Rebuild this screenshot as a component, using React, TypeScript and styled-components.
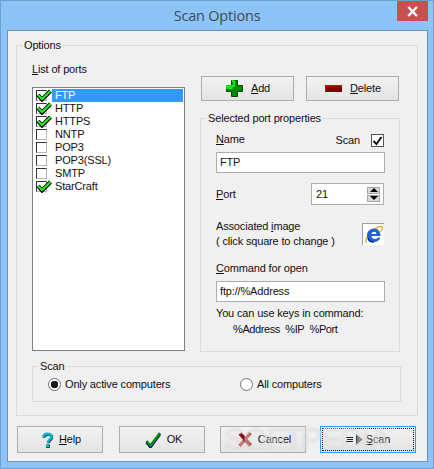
import React from 'react';
import styled, { createGlobalStyle } from 'styled-components';

const GlobalStyle = createGlobalStyle`
  html, body {
    margin: 0;
    padding: 0;
    background: #8cc4f8;
  }
  * {
    box-sizing: border-box;
  }
`;

const ports = [
  { name: 'FTP', on: true },
  { name: 'HTTP', on: true },
  { name: 'HTTPS', on: true },
  { name: 'NNTP', on: false },
  { name: 'POP3', on: false },
  { name: 'POP3(SSL)', on: false },
  { name: 'SMTP', on: false },
  { name: 'StarCraft', on: true },
];

const GreenCheck = () => (
  <CheckSvg width="16" height="13" viewBox="0 0 16 13">
    <path d="M2 6 L6 10.5 L14.500 2" fill="none" stroke="#000" strokeWidth="4" />
    <path d="M2 6 L6 10 L14.500 2" fill="none" stroke="#22ee22" strokeWidth="2.2" />
  </CheckSvg>
);

const PlusIcon = () => (
  <svg width="17" height="17" viewBox="0 0 17 17">
    <path d="M5.5 .5h6v5h5v6h-5v5h-6v-5h-5v-6h5z" fill="#008a00" stroke="#004d00" />
    <path d="M6 1h2v5H1v2h5v1" fill="none" stroke="#22ff22" strokeWidth="1.4" />
  </svg>
);

const MinusIcon = () => (
  <svg width="17" height="7" viewBox="0 0 17 7">
    <rect x="0" y="0" width="17" height="7" fill="#e00000" />
    <rect x="1" y="1.5" width="16" height="5.5" fill="#800000" />
  </svg>
);

const HelpIcon = () => (
  <svg width="11" height="16" viewBox="0 0 11 16">
    <path d="M1.500 5C1.500 .8 9.500 .8 9.500 4.500C9.500 7 6 7.500 6 10.500" fill="none" stroke="#06505f" strokeWidth="2.800" transform="translate(.5 .7)" />
    <path d="M1.500 5C1.500 .8 9.500 .8 9.500 4.500C9.500 7 6 7.500 6 10.500" fill="none" stroke="#12b4cc" strokeWidth="2.400" />
    <rect x="4" y="12.500" width="4" height="3.500" fill="#06505f" />
    <rect x="4" y="12.500" width="3" height="2.500" fill="#12b4cc" />
  </svg>
);

const OkIcon = () => (
  <svg width="16" height="16" viewBox="0 0 16 16">
    <path d="M1.500 9.500L5.500 14.500L15 1.500" fill="none" stroke="#001a70" strokeWidth="2.800" transform="translate(0 .6)" />
    <path d="M1.500 9L5.500 13.500L15 1" fill="none" stroke="#0a8a12" strokeWidth="2.600" />
  </svg>
);

const CancelIcon = () => (
  <svg width="14" height="15" viewBox="0 0 14 15">
    <path d="M2 1.500L12.500 13.500" stroke="#8c1010" strokeWidth="3.600" />
    <path d="M12.500 1L1.500 14" stroke="#a51a1a" strokeWidth="3" />
  </svg>
);

const ScanIcon = () => (
  <svg width="17" height="11" viewBox="0 0 17 11">
    <path d="M0 3.500h7M1 5.500h6M0 7.500h7" stroke="#222" strokeWidth="1" />
    <path d="M10 0L16.500 5.500L10 11z" fill="#333" />
  </svg>
);

const IeIcon = () => (
  <svg width="20" height="20" viewBox="0 0 20 20">
    <path d="M3 18C0 18 3 9 9 5C14 1.500 18 .5 18.500 2.500C19 4 17 6 16 7" fill="none" stroke="#e8a020" strokeWidth="1.200" />
    <path d="M3 10.500C3 6.500 6 3.500 10 3.500C14 3.500 16.500 6.500 16.500 11H7.500C7.800 14.500 12 15 14 12.500H16.300C15 16 12.500 17 10 17C6 17 3 14.500 3 10.500ZM7.500 9H12.500C12.300 6 7.800 6 7.500 9Z" fill="#1c62d4" fillRule="evenodd" />
    <path d="M4 13C4.500 15.500 7 17 10 17" fill="none" stroke="#0b2c80" strokeWidth="1.400" />
  </svg>
);

const App = () => {
  return (
    <>
      <GlobalStyle />
      <Window>
        <TitleBar>
          <Title>Scan Options</Title>
          <CloseButton>×</CloseButton>
        </TitleBar>
        <Client>
          <OptionsGroup>
            <Legend>Options</Legend>
            <Columns>
              <div>
                <ListLabel><u>L</u>ist of ports</ListLabel>
                <PortList>
                  {ports.map((port, i) => (
                    <PortRow key={port.name}>
                      <CheckBox>{port.on && <GreenCheck />}</CheckBox>
                      <PortName $selected={i === 0}>{port.name}</PortName>
                    </PortRow>
                  ))}
                </PortList>
              </div>
              <RightColumn>
                <ButtonRow>
                  <ActionButton><PlusIcon /><span><u>A</u>dd</span></ActionButton>
                  <ActionButton><MinusIcon /><span><u>D</u>elete</span></ActionButton>
                </ButtonRow>
                <PropertiesGroup>
                  <Legend>Selected port properties</Legend>
                  <NameRow>
                    <span><u>N</u>ame</span>
                    <ScanToggle>
                      <span>Scan</span>
                      <ScanBox>
                        <svg width="11" height="10" viewBox="0 0 11 10">
                          <path d="M1.500 5L4.500 8L9.500 1" fill="none" stroke="#111" strokeWidth="2" />
                        </svg>
                      </ScanBox>
                    </ScanToggle>
                  </NameRow>
                  <TextBox>FTP</TextBox>
                  <PortFieldRow>
                    <span><u>P</u>ort</span>
                    <SpinBox>
                      21
                      <SpinButtons>
                        <SpinButton><UpArrow /></SpinButton>
                        <SpinButton><DownArrow /></SpinButton>
                      </SpinButtons>
                    </SpinBox>
                  </PortFieldRow>
                  <ImageRow>
                    <ImageText>
                      Associated <u>i</u>mage<br />
                      ( click square to change )
                    </ImageText>
                    <ImageSquare><IeIcon /></ImageSquare>
                  </ImageRow>
                  <CommandLabel><u>C</u>ommand for open</CommandLabel>
                  <TextBox>ftp://%Address</TextBox>
                  <Hint>You can use keys in command:</Hint>
                  <KeysHint>%Address&nbsp; %IP&nbsp; %Port</KeysHint>
                </PropertiesGroup>
              </RightColumn>
            </Columns>
            <ScanGroup>
              <Legend>Scan</Legend>
              <RadioRow>
                <RadioOption $width={192}>
                  <Radio $checked />
                  Only active computers
                </RadioOption>
                <RadioOption $width={150}>
                  <Radio />
                  All computers
                </RadioOption>
              </RadioRow>
            </ScanGroup>
          </OptionsGroup>
          <Footer>
            <FooterButton><HelpIcon /><span><u>H</u>elp</span></FooterButton>
            <FooterButton $left={16}><OkIcon /><span>OK</span></FooterButton>
            <FooterButton $left={15}><CancelIcon /><span>Cancel</span></FooterButton>
            <FocusedButton $left={14}>
              <FocusRing><ScanIcon /><span><u>S</u>can</span></FocusRing>
            </FocusedButton>
          </Footer>
        </Client>
        <Watermark>SOFTPEDIA<sup>®</sup></Watermark>
      </Window>
    </>
  );
};

export default App;

const Window = styled.div`
  position: relative;
  width: 434px;
  height: 469px;
  display: flex;
  flex-direction: column;
  overflow: hidden;
  background: #8cc4f8;
  border: 1px solid #6f9fcf;
  font-family: "Liberation Sans", Arial, sans-serif;
  font-size: 11px;
  line-height: 13px;
  letter-spacing: -0.16px;
  color: #111;
`;

const TitleBar = styled.div`
  position: relative;
  height: 29px;
  flex: none;
  display: flex;
  align-items: center;
  justify-content: center;
`;

const Title = styled.div`
  font-family: "Open Sans", "Noto Sans", sans-serif;
  font-size: 14.5px;
  letter-spacing: -0.2px;
  color: #3d4a58;
`;

const CloseButton = styled.div`
  position: absolute;
  top: 0;
  right: 5px;
  width: 31px;
  height: 20px;
  background: #c75050;
  color: #fff;
  font-family: "DejaVu Sans", sans-serif;
  font-size: 17px;
  font-weight: bold;
  line-height: 20px;
  text-align: center;
`;

const Client = styled.div`
  flex: 1;
  margin: 0 5px 6px 6px;
  padding: 8px 9px 0 8px;
  background: #f0f0f0;
  border: 1px solid #6f93b8;
`;

const Group = styled.fieldset`
  margin: 0;
  min-width: 0;
  border: 1px solid #dcdcdc;
  border-radius: 0;
`;

const Legend = styled.legend`
  padding: 0 1px;
  margin-left: -9px;
  line-height: 13px;
`;

const OptionsGroup = styled(Group)`
  height: 377px;
  padding: 11px 15px 0 15px;
`;

const Columns = styled.div`
  display: grid;
  grid-template-columns: 153px 201px;
  column-gap: 15px;
`;

const ListLabel = styled.div`
  height: 24px;
`;

const PortList = styled.div`
  height: 264px;
  padding: 1px;
  background: #fff;
  border: 1px solid #7b8189;
`;

const PortRow = styled.div`
  height: 13px;
  display: flex;
  align-items: center;
  padding-left: 2px;
`;

const CheckBox = styled.div`
  position: relative;
  width: 11px;
  height: 11px;
  flex: none;
  background: #fff;
  border: 1px solid;
  border-color: #333 #b5b5b5 #b5b5b5 #333;
`;

const CheckSvg = styled.svg`
  position: absolute;
  left: -1px;
  top: -2px;
`;

const PortName = styled.div<{ $selected?: boolean }>`
  flex: 1;
  height: 13px;
  margin-left: 5px;
  padding-left: 3px;
  background: ${(p) => (p.$selected ? '#3399ff' : 'transparent')};
  color: ${(p) => (p.$selected ? '#fff' : '#111')};
`;

const RightColumn = styled.div`
  padding-top: 13px;
`;

const ButtonRow = styled.div`
  display: flex;
  justify-content: space-between;
  padding: 0 2px 0 1px;
  margin-bottom: 11px;
`;

const RaisedButton = styled.div`
  display: flex;
  align-items: center;
  justify-content: center;
  background: linear-gradient(#f2f2f2, #e4e4e4);
  border: 1px solid #adadad;
`;

const ActionButton = styled(RaisedButton)`
  width: 93px;
  height: 25px;
  gap: 8px;
  padding-left: 1px;
`;

const PropertiesGroup = styled(Group)`
  height: 240px;
  width: 200px;
  padding: 8px 15px 0 15px;
`;

const NameRow = styled.div`
  height: 19px;
  display: flex;
  justify-content: space-between;
  align-items: flex-start;
`;

const ScanToggle = styled.div`
  display: flex;
  align-items: center;
  gap: 11px;
  margin-top: 1px;
`;

const ScanBox = styled.div`
  width: 13px;
  height: 13px;
  display: flex;
  align-items: center;
  justify-content: center;
  background: #fff;
  border: 1px solid #555;
`;

const TextBox = styled.div`
  width: 169px;
  height: 21px;
  display: flex;
  align-items: center;
  padding-left: 3px;
  background: #fff;
  border: 1px solid #adadad;
`;

const PortFieldRow = styled.div`
  display: flex;
  align-items: center;
  justify-content: space-between;
  margin-top: 10px;
`;

const SpinBox = styled.div`
  width: 73px;
  height: 22px;
  display: flex;
  align-items: center;
  justify-content: space-between;
  padding: 0 3px 0 4px;
  background: #fff;
  border: 1px solid #adadad;
`;

const SpinButtons = styled.div`
  display: flex;
  flex-direction: column;
  gap: 1px;
`;

const SpinButton = styled.div`
  width: 13px;
  height: 7px;
  display: flex;
  align-items: center;
  justify-content: center;
  background: #d8d8d8;
  border: 1px solid #a5a5a5;
`;

const UpArrow = styled.div`
  border: 4px solid transparent;
  border-top: 0;
  border-bottom-color: #000;
`;

const DownArrow = styled.div`
  border: 4px solid transparent;
  border-bottom: 0;
  border-top-color: #000;
`;

const ImageRow = styled.div`
  display: flex;
  justify-content: space-between;
  margin-top: 14px;
  height: 40px;
`;

const ImageText = styled.div`
  line-height: 15px;
`;

const ImageSquare = styled.div`
  width: 22px;
  height: 22px;
  margin-top: 4px;
  display: flex;
  align-items: center;
  justify-content: center;
  background: #fff;
  border-top: 1px solid #a0a0a0;
  border-left: 1px solid #a0a0a0;
`;

const CommandLabel = styled.div`
  height: 19px;
  margin-top: 3px;
`;

const Hint = styled.div`
  margin-top: 5px;
`;

const KeysHint = styled.div`
  margin-top: 3px;
  padding-left: 17px;
  letter-spacing: -0.4px;
`;

const ScanGroup = styled(Group)`
  width: 369px;
  height: 42px;
  margin-top: 8px;
  padding: 5px 0 0 15px;
`;

const RadioRow = styled.div`
  display: flex;
`;

const RadioOption = styled.div<{ $width: number }>`
  width: ${(p) => p.$width}px;
  display: flex;
  align-items: center;
  gap: 4px;
`;

const Radio = styled.div<{ $checked?: boolean }>`
  width: 13px;
  height: 13px;
  flex: none;
  border-radius: 50%;
  border: 1px solid #707070;
  background: ${(p) => (p.$checked ? 'radial-gradient(circle, #1a1a1a 0 3.5px, #fff 4px)' : '#fff')};
`;

const Footer = styled.div`
  display: flex;
  margin: 10px 0 0 1px;
`;

const FooterButton = styled(RaisedButton)<{ $left?: number }>`
  width: 86px;
  height: 27px;
  gap: 6px;
  padding-left: 3px;
  margin-left: ${(p) => p.$left ?? 0}px;
`;

const FocusedButton = styled(FooterButton)`
  width: 96px;
  padding: 1px;
  border-color: #3399ff;
`;

const FocusRing = styled.div`
  flex: 1;
  height: 100%;
  display: flex;
  align-items: center;
  justify-content: center;
  gap: 3px;
  border: 1px dotted #111;
`;

const Watermark = styled.div`
  position: absolute;
  left: 223px;
  top: 420px;
  font-family: "Liberation Sans", sans-serif;
  font-size: 32px;
  font-weight: bold;
  line-height: 36px;
  letter-spacing: -2px;
  color: rgba(255, 255, 255, 0.35);
  text-shadow: 0 0 1px rgba(150, 150, 150, 0.25);
  pointer-events: none;

  sup {
    font-size: 9px;
    line-height: 0;
    letter-spacing: 0;
    vertical-align: 18px;
  }
`;
